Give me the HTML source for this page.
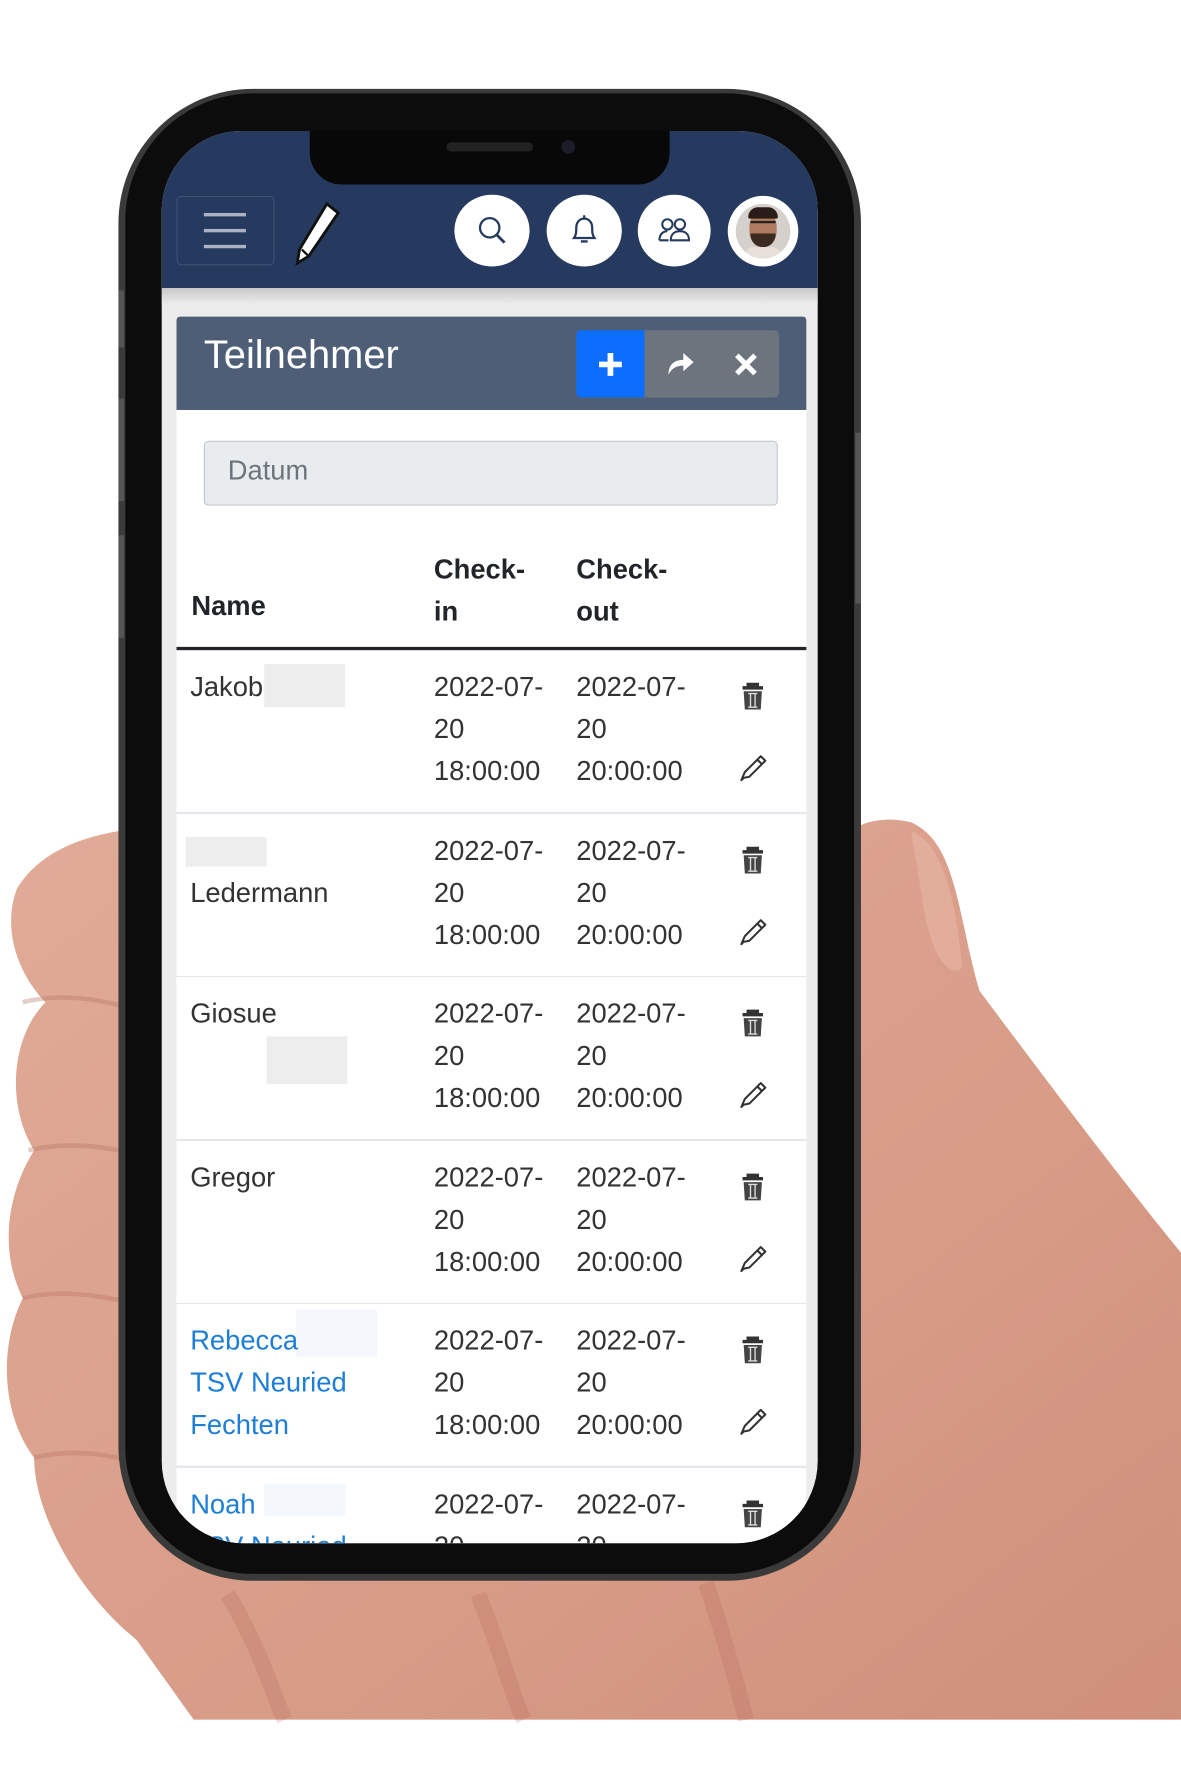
<!DOCTYPE html>
<html><head><meta charset="utf-8"><style>
html,body{margin:0;padding:0;background:#fff;width:1181px;height:1772px;overflow:hidden}
#w{position:absolute;left:0;top:0;width:1037px;height:1556px;transform:scale(1.13886);transform-origin:0 0;font-family:"Liberation Sans",sans-serif}
.abs{position:absolute}
#screen{position:absolute;left:142px;top:115px;width:576px;height:1240px;border-radius:70px 70px 72px 72px;overflow:hidden;background:#ececec}
.row{position:absolute;left:13px;width:553px;height:144px;box-sizing:border-box;background:#fff;border-bottom:2px solid #e3e6ea}
.c{position:absolute;top:14px;font-size:24px;line-height:37px;color:#333;white-space:nowrap}
.n{left:12px}.ci{left:226px}.co{left:351px}
.blue{color:#1c7ed6}
.mask{position:absolute;background:#ededed}
</style></head><body><div id="w">
<svg class="abs" style="left:0;top:0" width="1037" height="1556" viewBox="0 0 1037 1556">
<defs><linearGradient id="sk" x1="0" y1="0" x2="1" y2="1"><stop offset="0" stop-color="#e0ab98"/><stop offset="0.6" stop-color="#d89c87"/><stop offset="1" stop-color="#cf8f7b"/></linearGradient></defs>
<path d="M150 725 C90 728 40 740 15 780 C0 820 20 860 40 880 C10 910 5 970 30 1010 C5 1050 0 1100 20 1140 C0 1180 0 1240 30 1280 C30 1330 70 1400 120 1440 L170 1510 L1037 1510 L1037 1100 C980 1030 920 950 860 870 C840 800 840 740 800 722 C770 715 745 725 740 740 Z" fill="url(#sk)"/>
<path d="M800 730 C830 740 840 800 845 850 C830 860 815 830 810 790 Z" fill="#e7b8a7" opacity="0.6"/>
<path d="M20 880 C60 870 100 880 130 890 M25 1010 C70 1000 110 1010 140 1020 M20 1140 C60 1130 100 1140 140 1150 M30 1280 C70 1270 110 1280 140 1290" stroke="#b57462" stroke-width="4" fill="none" opacity="0.35"/>
<path d="M200 1400 C230 1450 240 1490 250 1510 M420 1400 C440 1450 450 1490 460 1510 M620 1390 C640 1450 650 1490 655 1510" stroke="#a8604f" stroke-width="14" fill="none" opacity="0.2"/>
<rect x="104" y="78" width="652" height="1310" rx="118" fill="#3a3a3a"/>
<rect x="110" y="82" width="640" height="1300" rx="112" fill="#0c0c0c"/>
<rect x="104" y="255" width="5" height="50" fill="#555"/><rect x="104" y="350" width="5" height="90" fill="#555"/><rect x="104" y="470" width="5" height="90" fill="#555"/><rect x="751" y="380" width="5" height="150" fill="#555"/>
</svg>
<div id="screen">
 <div class="abs" style="left:0;top:0;width:576px;height:138px;background:#253a5e"></div>
 <div class="abs" style="left:130px;top:0;width:316px;height:47px;background:#080808;border-radius:0 0 28px 28px"></div>
 <div class="abs" style="left:250px;top:10px;width:76px;height:8px;background:#222;border-radius:4px"></div>
 <div class="abs" style="left:351px;top:8px;width:12px;height:12px;background:#1c1c2a;border-radius:50%"></div>
 <div class="abs" style="left:13px;top:57px;width:84px;height:59px;border:1px solid #3e5276;border-radius:4px"></div>
 <div class="abs" style="left:37px;top:72px;width:37px;height:3px;background:#aab3c3;box-shadow:0 14px 0 #aab3c3,0 28px 0 #aab3c3"></div>
 <svg class="abs" style="left:115px;top:62px" width="45" height="56" viewBox="0 0 45 56"><path d="M30 2 L40 10 L14 48 L4 54 L6 42 Z" fill="#fff" stroke="#111" stroke-width="2.5"/><path d="M8 42 L14 48" stroke="#111" stroke-width="2"/></svg>
 <div class="abs" style="left:257px;top:56px;width:66px;height:63px;border-radius:50%;background:#fff"></div>
 <svg class="abs" style="left:276px;top:74px" width="28" height="28" viewBox="0 0 28 28"><circle cx="12" cy="11" r="8.5" fill="none" stroke="#253a5e" stroke-width="2"/><path d="M18 17 L25 24" stroke="#253a5e" stroke-width="2.5"/></svg>
 <div class="abs" style="left:338px;top:56px;width:66px;height:63px;border-radius:50%;background:#fff"></div>
 <svg class="abs" style="left:358px;top:73px" width="26" height="30" viewBox="0 0 26 30"><path d="M4 21 C6 18 6 16 6 12 C6 7 9 4 13 4 C17 4 20 7 20 12 C20 16 20 18 22 21 Z" fill="none" stroke="#253a5e" stroke-width="2"/><path d="M13 1 V4 M10 24 H16" stroke="#253a5e" stroke-width="2"/></svg>
 <div class="abs" style="left:418px;top:56px;width:64px;height:63px;border-radius:50%;background:#fff"></div>
 <svg class="abs" style="left:435px;top:76px" width="30" height="24" viewBox="0 0 30 24"><circle cx="9" cy="6" r="4.5" fill="none" stroke="#253a5e" stroke-width="1.8"/><circle cx="20" cy="6" r="4.5" fill="none" stroke="#253a5e" stroke-width="1.8"/><path d="M2 20 C2 14 6 12 9 12 M12 20 C12 14 16 12 20 12 C24 12 28 14 28 20 Z M2 20 H10" fill="none" stroke="#253a5e" stroke-width="1.8"/></svg>
 <div class="abs" style="left:497px;top:57px;width:62px;height:62px;border-radius:50%;background:#fff"></div>
 <div class="abs" style="left:504px;top:64px;width:48px;height:48px;border-radius:50%;background:#d6d0cc;overflow:hidden">
  <div class="abs" style="left:12px;top:6px;width:24px;height:32px;border-radius:45%;background:#b07a5e"></div>
  <div class="abs" style="left:11px;top:3px;width:26px;height:10px;border-radius:12px 12px 2px 2px;background:#2a1c16"></div>
  <div class="abs" style="left:13px;top:15px;width:22px;height:5px;border-top:2px solid #222"></div>
  <div class="abs" style="left:13px;top:26px;width:22px;height:12px;border-radius:0 0 12px 12px;background:#3a2a22"></div>
  <div class="abs" style="left:8px;top:38px;width:32px;height:14px;background:#e8e0d8;border-radius:8px 8px 0 0"></div>
 </div>
 <div class="abs" style="left:0;top:138px;width:576px;height:14px;background:linear-gradient(#c8c8c8,#ececec)"></div>
 <div class="abs" style="left:13px;top:163px;width:553px;height:82px;background:#4e5e77;border-radius:3px 3px 0 0"></div>
 <div class="abs" style="left:37px;top:173px;font-size:35px;color:#fff;line-height:48px">Teilnehmer</div>
 <div class="abs" style="left:364px;top:175px;width:60px;height:59px;background:#0d6efd;border-radius:4px 0 0 4px"></div>
 <div class="abs" style="left:424px;top:175px;width:118px;height:59px;background:#6c757d;border-radius:0 4px 4px 0"></div>
 <svg class="abs" style="left:381px;top:192px" width="26" height="26" viewBox="0 0 26 26"><path d="M13 3 V23 M3 13 H23" stroke="#fff" stroke-width="5"/></svg>
 <svg class="abs" style="left:441px;top:191px" width="28" height="26" viewBox="0 0 28 26"><path d="M4 23 C4 14 9 10 17 10 V4 L26 12 L17 20 V15 C11 15 7 17 4 23 Z" fill="#fff"/></svg>
 <svg class="abs" style="left:502px;top:194px" width="22" height="22" viewBox="0 0 22 22"><path d="M3 3 L19 19 M19 3 L3 19" stroke="#fff" stroke-width="4.5"/></svg>
 <div class="abs" style="left:13px;top:245px;width:553px;height:1000px;background:#fff"></div>
 <div class="abs" style="left:37px;top:272px;width:502px;height:55px;background:#e9ecef;border:1px solid #c5c9ce;border-radius:4px"></div>
 <div class="abs" style="left:58px;top:285px;font-size:24px;color:#6c757d">Datum</div>
 <div class="abs" style="left:26px;top:404px;font-size:24px;font-weight:bold;color:#212529">Name</div>
 <div class="abs" style="left:239px;top:367px;font-size:24px;font-weight:bold;color:#212529;line-height:37px">Check-<br>in</div>
 <div class="abs" style="left:364px;top:367px;font-size:24px;font-weight:bold;color:#212529;line-height:37px">Check-<br>out</div>
 <div class="abs" style="left:13px;top:453px;width:553px;height:3px;background:#212529"></div>

 <div class="row" style="top:456px"><div class="mask" style="left:77px;top:12px;width:71px;height:38px"></div><div class="c n">Jakob</div><div class="c ci">2022-07-<br>20<br>18:00:00</div><div class="c co">2022-07-<br>20<br>20:00:00</div></div>
 <div class="row" style="top:600px"><div class="mask" style="left:8px;top:20px;width:71px;height:26px"></div><div class="c n"><br>Ledermann</div><div class="c ci">2022-07-<br>20<br>18:00:00</div><div class="c co">2022-07-<br>20<br>20:00:00</div></div>
 <div class="row" style="top:743px"><div class="mask" style="left:79px;top:52px;width:71px;height:42px"></div><div class="c n">Giosue</div><div class="c ci">2022-07-<br>20<br>18:00:00</div><div class="c co">2022-07-<br>20<br>20:00:00</div></div>
 <div class="row" style="top:887px"><div class="c n">Gregor</div><div class="c ci">2022-07-<br>20<br>18:00:00</div><div class="c co">2022-07-<br>20<br>20:00:00</div></div>
 <div class="row" style="top:1030px"><div class="mask" style="left:105px;top:5px;width:71px;height:42px;background:#f3f7fc"></div><div class="c n blue">Rebecca<br>TSV Neuried<br>Fechten</div><div class="c ci">2022-07-<br>20<br>18:00:00</div><div class="c co">2022-07-<br>20<br>20:00:00</div></div>
 <div class="row" style="top:1174px"><div class="mask" style="left:77px;top:14px;width:71px;height:28px;background:#f3f7fc"></div><div class="c n blue">Noah<br>TSV Neuried</div><div class="c ci">2022-07-<br>20<br>18:00:00</div><div class="c co">2022-07-<br>20<br>20:00:00</div></div>
</div>
<svg class="abs" style="left:142px;top:115px;pointer-events:none" width="576" height="1240" viewBox="0 0 576 1240">
<defs><g id="tr"><path d="M-9 -8 H9 M-4 -8 V-11 H4 V-8" stroke="#333" stroke-width="3" fill="none"/><path d="M-8 -5 H8 L7 11 H-7 Z" fill="#444"/><path d="M-2 -3 V9 M2 -3 V9 M-4 -3 H4 M-4 9 H4" stroke="#ddd" stroke-width="1.2"/></g>
<g id="pe"><path d="M-9 11 L-11 13 L-8 6 L6 -8 L10 -4 L-4 10 Z M3 -5 L7 -1" fill="none" stroke="#333" stroke-width="1.8" stroke-linejoin="round"/></g></defs>
<use href="#tr" x="519" y="497"/><use href="#pe" x="520" y="557"/>
<use href="#tr" x="519" y="641"/><use href="#pe" x="520" y="701"/>
<use href="#tr" x="519" y="784"/><use href="#pe" x="520" y="844"/>
<use href="#tr" x="519" y="928"/><use href="#pe" x="520" y="988"/>
<use href="#tr" x="519" y="1071"/><use href="#pe" x="520" y="1131"/>
<use href="#tr" x="519" y="1215"/>
</svg>
</div></body></html>
